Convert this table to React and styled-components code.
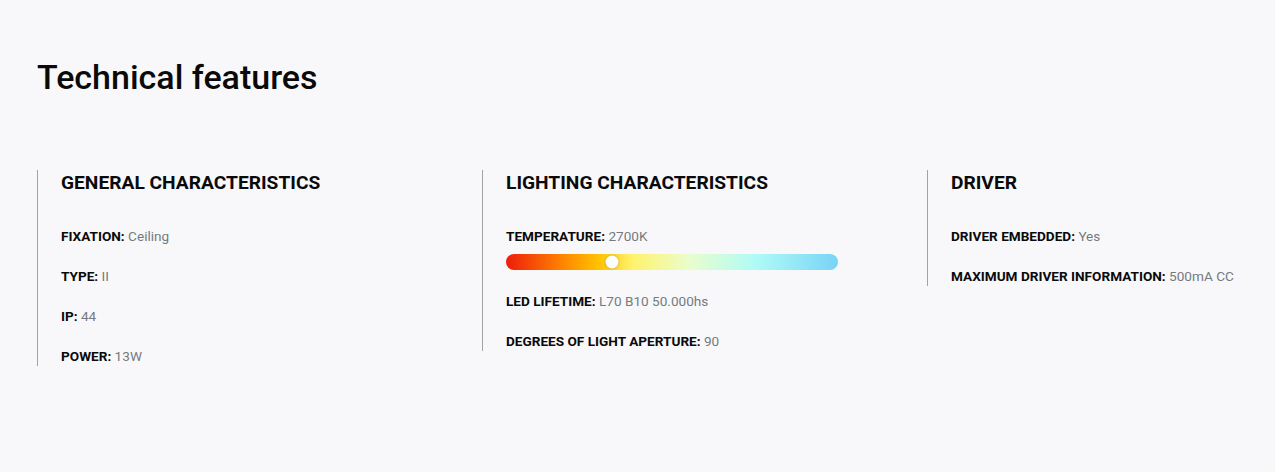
import styled, { createGlobalStyle } from "styled-components";

const GlobalStyle = createGlobalStyle`
  body {
    margin: 0;
    background: #f8f8fa;
    font-family: Roboto, "Liberation Sans", Arial, sans-serif;
    overflow: hidden;
  }
`;

const sections = [
  {
    title: "GENERAL CHARACTERISTICS",
    items: [
      { label: "FIXATION", value: "Ceiling" },
      { label: "TYPE", value: "II" },
      { label: "IP", value: "44" },
      { label: "POWER", value: "13W" },
    ],
  },
  {
    title: "LIGHTING CHARACTERISTICS",
    items: [
      { label: "TEMPERATURE", value: "2700K", scale: 32 },
      { label: "LED LIFETIME", value: "L70 B10 50.000hs" },
      { label: "DEGREES OF LIGHT APERTURE", value: "90" },
    ],
  },
  {
    title: "DRIVER",
    items: [
      { label: "DRIVER EMBEDDED", value: "Yes" },
      { label: "MAXIMUM DRIVER INFORMATION", value: "500mA CC" },
    ],
  },
];

const App = () => {
  return (
    <Page>
      <GlobalStyle />
      <Title>Technical features</Title>
      <Columns>
        {sections.map((section) => (
          <Column key={section.title}>
            <ColumnTitle>{section.title}</ColumnTitle>
            <ItemList>
              {section.items.map((item) => (
                <Item key={item.label}>
                  <Row>
                    <Label>{item.label}:</Label> <Value>{item.value}</Value>
                  </Row>
                  {item.scale !== undefined && (
                    <Scale>
                      <Knob style={{ left: `${item.scale}%` }} />
                    </Scale>
                  )}
                </Item>
              ))}
            </ItemList>
          </Column>
        ))}
      </Columns>
    </Page>
  );
};

const Page = styled.main`
  width: 100%;
  min-height: 472px;
  padding: 57px 0 0 37px;
  box-sizing: border-box;
`;

const Title = styled.h1`
  margin: 0;
  font-size: 34px;
  line-height: 40px;
  font-weight: 500;
  color: #0a0a0a;
`;

const Columns = styled.div`
  display: grid;
  grid-template-columns: 445px 445px auto;
  align-items: start;
  margin-top: 73px;
`;

const Column = styled.section`
  border-left: 1px solid #a3a3a6;
  padding-left: 23px;
  display: flex;
  flex-direction: column;
  gap: 30px;
`;

const ColumnTitle = styled.h2`
  margin: 0;
  font-size: 19.2px;
  line-height: 26px;
  font-weight: 700;
  color: #0a0a0a;
`;

const ItemList = styled.div`
  display: flex;
  flex-direction: column;
  gap: 20px;
`;

const Item = styled.div`
  display: flex;
  flex-direction: column;
  gap: 8px;
`;

const Row = styled.p`
  margin: 0;
  font-size: 13.6px;
  line-height: 20px;
`;

const Label = styled.strong`
  font-weight: 700;
  color: #0a0a0a;
`;

const Value = styled.span`
  color: #767a80;
`;

const Scale = styled.div`
  position: relative;
  width: 332px;
  height: 16px;
  margin-bottom: 1px;
  border-radius: 8px;
  background: linear-gradient(
    to right,
    #ee1c0c 0%,
    #ff8a00 18%,
    #ffc300 28%,
    #fff36b 38%,
    #eafdcc 55%,
    #b0fbf6 75%,
    #78d3f6 100%
  );
`;

const Knob = styled.span`
  position: absolute;
  top: 50%;
  width: 13px;
  height: 13px;
  border-radius: 50%;
  background: #fff;
  box-shadow: 0 0 3px rgba(0, 0, 0, 0.25);
  transform: translate(-50%, -50%);
`;

export default App;
